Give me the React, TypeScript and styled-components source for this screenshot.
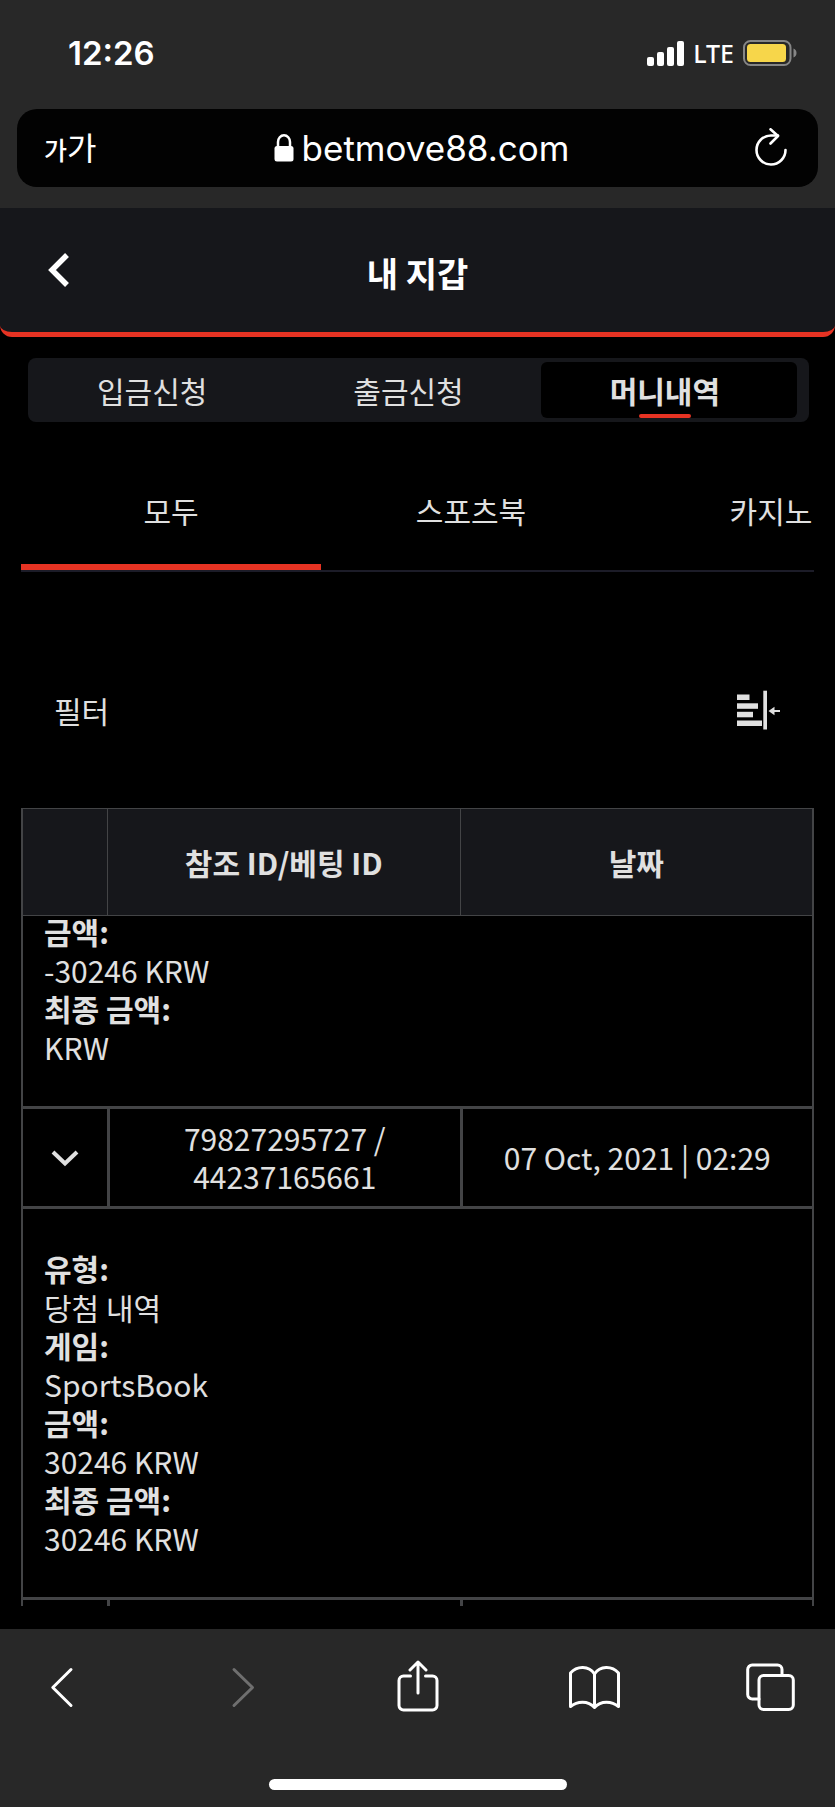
import React from 'react';
import styled, { createGlobalStyle } from 'styled-components';

const colors = {
  chrome: '#282828',
  panel: '#16171b',
  accent: '#e63323',
  text: '#e0e0e0',
  line: '#434446',
};

const korean = `'Noto Sans CJK KR', 'Noto Sans', sans-serif`;
const system = `Inter, 'Noto Sans CJK KR', sans-serif`;

const GlobalStyle = createGlobalStyle`
  * { box-sizing: border-box; }
  body { margin: 0; background: #000; color: ${colors.text}; font-family: ${korean}; font-size: 30px; }
  button { margin: 0; padding: 0; border: 0; background: none; color: inherit; font: inherit; cursor: pointer; }
  svg { display: block; flex: none; }
`;

const Screen = styled.div`
  display: flex;
  flex-direction: column;
  min-height: 100vh;
`;

const BrowserTop = styled.header`
  background: ${colors.chrome};
  color: #fff;
  font-family: ${system};
  padding: 0 17px 21px;
`;

const StatusBar = styled.div`
  display: flex;
  align-items: center;
  justify-content: space-between;
  height: 109px;
  padding: 0 21px 3px 51px;
`;

const Clock = styled.time`
  font-size: 33px;
  line-height: 40px;
  font-weight: 600;
`;

const StatusIcons = styled.div`
  display: flex;
  align-items: center;
  gap: 9px;
  font-family: 'Noto Sans', sans-serif;
  font-size: 25px;
  line-height: 32px;
  font-weight: 500;
`;

const AddressBar = styled.div`
  display: flex;
  align-items: center;
  justify-content: space-between;
  height: 78px;
  padding: 0 31px 0 27px;
  border-radius: 20px;
  background: #020202;
`;

const TextSizeButton = styled.button`
  display: flex;
  align-items: baseline;
  flex: 1;
  padding-top: 4px;
  font-size: 32px;
  line-height: 40px;
  small { font-size: 25px; font-weight: 500; }
`;

const Address = styled.button`
  display: flex;
  align-items: center;
  gap: 8px;
  padding-left: 12px;
  font-size: 35px;
  line-height: 44px;
`;

const ReloadButton = styled.button`
  display: flex;
  justify-content: flex-end;
  flex: 1;
`;

const PageHeader = styled.div`
  display: grid;
  grid-template-columns: 80px 1fr 80px;
  align-items: center;
  height: 129px;
  border-bottom: 5px solid ${colors.accent};
  border-radius: 0 0 12px 12px;
  background: ${colors.panel};
  color: #fff;
`;

const BackButton = styled.button`
  display: flex;
  justify-content: flex-end;
  padding: 0 10px 0 0;
`;

const Title = styled.h1`
  margin: 0;
  padding-top: 6px;
  font-size: 34px;
  line-height: 48px;
  font-weight: 700;
  text-align: center;
`;

const Content = styled.main`
  flex: 1;
  padding: 21px 21px 23px;
`;

const Segments = styled.nav`
  display: grid;
  grid-template-columns: repeat(3, 1fr);
  height: 64px;
  margin: 0 5px 0 7px;
  padding: 4px 12px 4px 0;
  border-radius: 8px;
  background: ${colors.panel};
`;

const Segment = styled.button<{ $active?: boolean }>`
  display: flex;
  flex-direction: column;
  align-items: center;
  padding-right: 8px;
  border-radius: 6px;
  background: ${p => (p.$active ? '#000' : 'transparent')};
  font-weight: ${p => (p.$active ? 700 : 400)};
  line-height: 56px;
  white-space: nowrap;
  &::after {
    content: '';
    width: 52px;
    height: 4px;
    margin-top: -4px;
    border-radius: 2px;
    background: ${p => (p.$active ? colors.accent : 'transparent')};
  }
`;

const Categories = styled.nav`
  display: flex;
  margin-top: 38px;
  overflow: hidden;
  border-bottom: 2px solid #1c1c28;
`;

const Category = styled.button<{ $active?: boolean }>`
  flex: 0 0 300px;
  height: 110px;
  padding-bottom: 4px;
  border-bottom: 6px solid ${p => (p.$active ? colors.accent : 'transparent')};
`;

const FilterRow = styled.div`
  display: flex;
  align-items: center;
  justify-content: space-between;
  height: 100px;
  margin: 88px 0 48px;
  padding: 0 34px 0 33px;
`;

const History = styled.table`
  width: 100%;
  table-layout: fixed;
  border-collapse: separate;
  border-spacing: 0;
  border: solid ${colors.line};
  border-width: 1px 2px 0;
  line-height: 38px;
`;

const HeadCell = styled.th<{ $width?: number }>`
  width: ${p => (p.$width ? `${p.$width}px` : 'auto')};
  height: 107px;
  padding: 0;
  border-bottom: 1px solid ${colors.line};
  background: ${colors.panel};
  font-weight: 700;
  & + & { border-left: 1px solid ${colors.line}; }
`;

const Cell = styled.td`
  height: 100px;
  padding: 10px 40px 11px;
  border-bottom: 3px solid ${colors.line};
  text-align: center;
  & + & { border-left: 3px solid ${colors.line}; }
`;

const ToggleCell = styled(Cell)`
  padding: 0;
`;

const ToggleButton = styled.button`
  display: block;
  margin: 0 auto;
`;

const CutCell = styled.td`
  height: 6px;
  padding: 0;
  & + & { border-left: 3px solid ${colors.line}; }
`;

const DetailCell = styled.td<{ $scrolled?: boolean }>`
  padding: ${p => (p.$scrolled ? '0 21px 40px' : '40px 21px')};
  border-bottom: 3px solid ${colors.line};
`;

const Details = styled.dl<{ $scrolled?: boolean }>`
  margin: ${p => (p.$scrolled ? '-4px 0 0' : '0')};
  dt { line-height: 39px; font-weight: 700; }
  dd { margin: 0; line-height: 38px; }
`;

const BrowserBottom = styled.footer`
  display: flex;
  flex-direction: column;
  align-items: center;
  padding: 31px 37px 17px;
  background: ${colors.chrome};
  color: #fff;
`;

const Toolbar = styled.div`
  display: flex;
  justify-content: space-between;
  width: 100%;
  margin-bottom: 65px;
`;

const ToolButton = styled.button`
  &:disabled { color: #6f6f6f; cursor: default; }
`;

const HomeIndicator = styled.div`
  width: 298px;
  height: 11px;
  border-radius: 6px;
  background: #fff;
`;

const ToolIcon = ({ children }: { children: React.ReactNode }) => (
  <svg width="52" height="54" viewBox="0 0 52 54" fill="none" stroke="currentColor" strokeWidth="3" strokeLinecap="round" strokeLinejoin="round">
    {children}
  </svg>
);

const SignalIcon = () => (
  <svg width="37" height="25" viewBox="0 0 37 25" fill="currentColor">
    <rect x="0" y="16" width="7" height="9" rx="2" />
    <rect x="10" y="11" width="7" height="14" rx="2" />
    <rect x="20" y="6" width="7" height="19" rx="2" />
    <rect x="30" y="0" width="7" height="25" rx="2" />
  </svg>
);

const BatteryIcon = () => (
  <svg width="54" height="26" viewBox="0 0 54 26">
    <rect x="1" y="1" width="46.500" height="24" rx="6.500" fill="none" stroke="#868686" strokeWidth="2" />
    <rect x="4" y="4" width="39" height="18" rx="3.500" fill="#f7d64a" />
    <path d="M50.500 8.500c4 1.500 4 7.500 0 9z" fill="#868686" />
  </svg>
);

const LockIcon = () => (
  <svg width="20" height="28" viewBox="0 0 20 28">
    <path d="M4 13V8a6 6.700 0 0 1 12 0v5" fill="none" stroke="currentColor" strokeWidth="2.500" />
    <rect x="0.500" y="12" width="19" height="15.500" rx="2.500" fill="currentColor" />
  </svg>
);

const ReloadIcon = () => (
  <svg width="32" height="40" viewBox="0 0 32 40" fill="none" stroke="currentColor" strokeWidth="2.600" strokeLinecap="round" strokeLinejoin="round">
    <path d="M30.500 22A14.500 14.500 0 1 1 16 7.500h7" />
    <path d="M15.500 1.300l7.500 6.700-7.500 7.500" />
  </svg>
);

const BackIcon = () => (
  <svg width="22" height="36" viewBox="0 0 22 36" fill="none" stroke="currentColor" strokeWidth="5.500">
    <path d="M19 3L4 18l15 15" />
  </svg>
);

const FilterIcon = () => (
  <svg width="43" height="40" viewBox="0 0 43 40" fill="currentColor">
    <rect x="0" y="4.500" width="12.500" height="5.500" />
    <rect x="0" y="13.300" width="21" height="5.500" />
    <rect x="0" y="21.800" width="16" height="5.500" />
    <rect x="0" y="30.500" width="25" height="5.500" />
    <rect x="26.300" y="0.700" width="3.700" height="38.800" />
    <path d="M31.500 21l6-4.200V20h5.500v2h-5.500v3.200z" />
  </svg>
);

const ChevronIcon = () => (
  <svg width="28" height="18" viewBox="0 0 28 18" fill="none" stroke="currentColor" strokeWidth="4">
    <path d="M2 3l12 11.500L26 3" />
  </svg>
);

type Entry = { label: string; value: string };

const stake: Entry[] = [
  { label: '금액:', value: '-30246 KRW' },
  { label: '최종 금액:', value: 'KRW' },
];

const winnings: Entry[] = [
  { label: '유형:', value: '당첨 내역' },
  { label: '게임:', value: 'SportsBook' },
  { label: '금액:', value: '30246 KRW' },
  { label: '최종 금액:', value: '30246 KRW' },
];

const DetailRow = ({ entries, scrolled }: { entries: Entry[]; scrolled?: boolean }) => (
  <tr>
    <DetailCell colSpan={3} $scrolled={scrolled}>
      <Details $scrolled={scrolled}>
        {entries.map(e => (
          <React.Fragment key={e.label}>
            <dt>{e.label}</dt>
            <dd>{e.value}</dd>
          </React.Fragment>
        ))}
      </Details>
    </DetailCell>
  </tr>
);

export default function App() {
  return (
    <Screen>
      <GlobalStyle />
      <BrowserTop>
        <StatusBar>
          <Clock>12:26</Clock>
          <StatusIcons>
            <SignalIcon />
            <span>LTE</span>
            <BatteryIcon />
          </StatusIcons>
        </StatusBar>
        <AddressBar>
          <TextSizeButton aria-label="글자 크기">
            <small>가</small>
            <span>가</span>
          </TextSizeButton>
          <Address>
            <LockIcon />
            <span>betmove88.com</span>
          </Address>
          <ReloadButton aria-label="새로고침">
            <ReloadIcon />
          </ReloadButton>
        </AddressBar>
      </BrowserTop>

      <PageHeader>
        <BackButton aria-label="뒤로">
          <BackIcon />
        </BackButton>
        <Title>내 지갑</Title>
      </PageHeader>

      <Content>
        <Segments>
          <Segment>입금신청</Segment>
          <Segment>출금신청</Segment>
          <Segment $active>머니내역</Segment>
        </Segments>

        <Categories>
          <Category $active>모두</Category>
          <Category>스포츠북</Category>
          <Category>카지노</Category>
        </Categories>

        <FilterRow>
          <span>필터</span>
          <button aria-label="필터 열기">
            <FilterIcon />
          </button>
        </FilterRow>

        <History>
          <thead>
            <tr>
              <HeadCell $width={84} />
              <HeadCell>참조 ID/베팅 ID</HeadCell>
              <HeadCell>날짜</HeadCell>
            </tr>
          </thead>
          <tbody>
            <DetailRow entries={stake} scrolled />
            <tr>
              <ToggleCell>
                <ToggleButton aria-label="접기">
                  <ChevronIcon />
                </ToggleButton>
              </ToggleCell>
              <Cell>79827295727 / 44237165661</Cell>
              <Cell>07 Oct, 2021 | 02:29</Cell>
            </tr>
            <DetailRow entries={winnings} />
            <tr>
              <CutCell />
              <CutCell />
              <CutCell />
            </tr>
          </tbody>
        </History>
      </Content>

      <BrowserBottom>
        <Toolbar>
          <ToolButton aria-label="이전 페이지">
            <ToolIcon><path d="M34 9.500L15.800 27.500 34 45.500" /></ToolIcon>
          </ToolButton>
          <ToolButton aria-label="다음 페이지" disabled>
            <ToolIcon><path d="M20 9.500l18.500 18L20 45.500" /></ToolIcon>
          </ToolButton>
          <ToolButton aria-label="공유">
            <ToolIcon>
              <path d="M18.500 16H11.500A4.500 4.500 0 0 0 7 20.500V45.500A4.500 4.500 0 0 0 11.500 50H40.500A4.500 4.500 0 0 0 45 45.500V20.500A4.500 4.500 0 0 0 40.500 16H33.500" />
              <path d="M26 33V2M18 10l8-8 8 8" />
            </ToolIcon>
          </ToolButton>
          <ToolButton aria-label="책갈피">
            <ToolIcon>
              <path d="M25.500 14C20 5.500 8 5.500 1.500 13V46.500C8 41 19 40 25.500 47.500 32 40 43 41 49.500 46.500V13C43 5.500 31 5.500 25.500 14zV47" />
            </ToolIcon>
          </ToolButton>
          <ToolButton aria-label="탭">
            <ToolIcon>
              <rect x="13" y="15.500" width="34.300" height="34" rx="4.500" />
              <path d="M36 15V9.500A4.500 4.500 0 0 0 31.500 5H6.200A4.500 4.500 0 0 0 1.700 9.500V34.500A4.500 4.500 0 0 0 6.200 39H13" />
            </ToolIcon>
          </ToolButton>
        </Toolbar>
        <HomeIndicator />
      </BrowserBottom>
    </Screen>
  );
}
